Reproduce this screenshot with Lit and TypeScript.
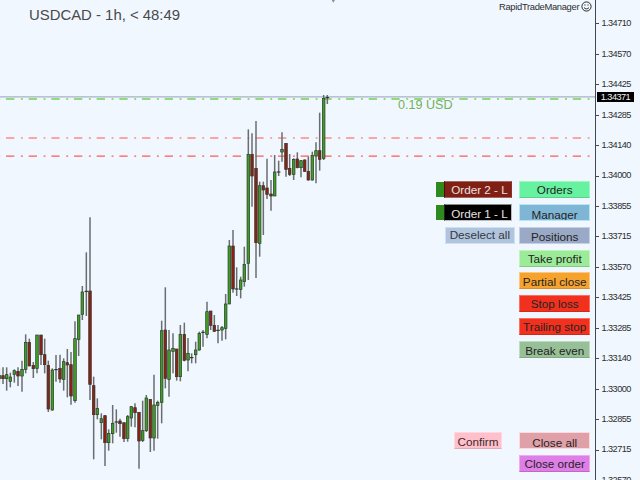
import { LitElement, html, css, svg } from "lit";
import { customElement } from "lit/decorators.js";

type C = [number, number, number, number, number, number];
// zoomed crop coordinates: x, wickTop, wickBottom, bodyTop, bodyBottom, dir (1 up, -1 down, 0 doji)
const setA: C[] = [
  [-2,265,310,286,296,1],[9,262,312,287,296,-1],[20,262,332,284,296,1],[31,278,322,291,304,1],[43,268,308,272,283,1],
  [54,262,318,274,288,-1],[66,242,335,268,288,1],[77,163,280,187,268,1],[88,176,258,187,258,-1],[100,246,294,256,266,-1],
  [111,165,280,165,265,1],[123,165,255,165,224,-1],[134,176,280,224,254,-1],[145,242,396,256,387,-1],[157,265,392,270,390,1],
  [168,225,305,268,270,0],[180,224,308,265,297,-1],[191,235,332,245,298,1],[202,207,352,248,255,-1],[213,216,374,254,348,-1],
  [225,124,368,176,362,1],[236,105,228,105,178,1],[247,18,120,36,103,1],[259,-83,108,33,35,0],[270,-188,360,33,313,-1],
  [281,290,538,317,404,-1],[292,355,418,385,404,1],[304,400,478,416,428,1],[315,405,558,407,488,-1],[326,448,512,460,488,1],
  [338,375,490,430,461,1],[349,388,458,425,427,0],[360,416,470,423,431,-1],[372,428,486,428,476,-1],[383,405,485,410,475,1],
  [394,378,440,380,414,1],[405,370,442,383,398,-1],[417,397,566,397,483,-1],[428,362,486,452,481,1],[439,345,456,354,452,1],
  [451,358,516,358,474,-1],[462,284,512,375,474,1],[473,362,476,367,376,1],[485,122,430,152,367,1],[496,22,325,150,295,-1],
  [507,150,350,210,298,1],[519,160,280,205,214,1],[530,207,302,207,290,-1],[541,135,304,163,290,1],[553,128,244,163,241,-1],
  [564,174,274,220,240,1],[575,220,250,232,234,0],[587,185,250,210,224,1],[598,155,212,160,210,1],[609,150,200,156,158,0],
  [621,65,175,95,163,1],
];
const setB: C[] = [
  [32,123,180,123,166,-1],[43,135,186,166,184,-1],[54,165,220,180,182,0],[66,168,212,173,180,1],[77,72,208,102,175,1],
];
const setD: C[] = [
  [88,480,672,498,672,1],[99,450,638,498,627,-1],[110,562,648,626,628,0],[122,590,655,600,628,1],[133,500,620,553,605,1],
  [145,148,600,223,550,1],[156,160,380,223,288,-1],[168,123,594,265,488,-1],[179,305,530,317,490,1],[190,305,465,317,330,-1],
  [201,236,357,324,343,-1],[213,300,392,342,348,-1],[224,225,348,276,348,1],[236,242,288,275,277,0],[246,157,245,208,216,1],
  [258,190,290,190,268,-1],[269,222,288,265,283,-1],[281,235,300,238,283,1],[292,217,265,237,263,-1],[303,240,292,242,263,1],
  [314,238,276,240,274,-1],[325,230,302,274,300,-1],[337,215,302,226,300,1],[348,187,310,212,228,1],[359,98,272,212,238,-1],
  [371,45,240,55,235,1],[382,45,72,52,54,0],
];
const toAbs = (list: C[], ox: number, oy: number): C[] =>
  list.map(([x, a, b, c, d, s]) => [ox + x / 3, oy + a / 3, oy + b / 3, oy + c / 3, oy + d / 3, s] as C);
const candles: C[] = [...toAbs(setA, 0, 280), ...toAbs(setB, 200, 270), ...toAbs(setD, 200, 80)];

const prices = ["1.34710","1.34570","1.34425","1.34285","1.34140","1.34000","1.33855","1.33715","1.33570","1.33425","1.33285","1.33140","1.33000","1.32855","1.32715","1.32570"];

@customElement("app-root")
export class AppRoot extends LitElement {
  static styles = css`
    :host { display: block; width: 640px; height: 480px; overflow: hidden; }
    .root { position: relative; display: grid; grid-template-columns: 595px 45px; width: 640px; height: 480px; background: #f0f7ff; overflow: hidden; font-family: "Liberation Sans", Arial, sans-serif; }
    .chart { display: block; width: 595px; height: 480px; }
    .w { stroke: #6a6e71; stroke-width: 1.5; }
    .b { stroke: #2b3a2e; stroke-width: 0.7; }
    .up { fill: #3f9e22; }
    .dn { fill: #8e2014; }
    .dj { stroke: #1c2420; stroke-width: 1; }
    .lg { stroke: #a9b2c2; stroke-width: 1.3; }
    .dash { stroke-width: 1.3; fill: none; stroke-dasharray: 8.3 6.6 1.9 5.87; stroke-dashoffset: -6; }
    .gr { stroke: #6cd457; stroke-width: 1.6; }
    .r1 { stroke: #ff8a84; }
    .r2 { stroke: #ff5a52; }
    .usd { font-size: 12.6px; fill: #74b05a; font-family: "Liberation Sans", Arial, sans-serif; }
    .mark { fill: #8c93a0; }
    .axis { border-left: 1.4px solid #45484c; display: flex; flex-direction: column; padding-top: 8.7px; box-sizing: border-box; height: 480px; }
    .tick { flex: 0 0 30.44px; display: flex; align-items: center; gap: 3px; font-size: 9.2px; color: #2e2e2e; letter-spacing: -0.55px; line-height: 1; }
    .tick::before { content: ""; width: 2.5px; height: 1px; background: #45484c; }
    .cur { position: absolute; left: 596.8px; top: 91.6px; width: 37.4px; height: 10.4px; background: #000; color: #f2f2f2; font-size: 9.2px; letter-spacing: -0.55px; line-height: 10.4px; text-align: center; }
    .title { position: absolute; left: 29px; top: 6px; font-size: 14.9px; line-height: 18px; color: #4a4a4a; }
    .brand { position: absolute; left: 499px; top: 0; height: 12px; display: flex; align-items: center; gap: 2px; font-size: 9.4px; letter-spacing: -0.32px; color: #2e2e2e; }
    .brand svg { display: block; }
    .panel { position: absolute; left: 436px; top: 181px; display: grid; grid-template-columns: 79px 70.6px; column-gap: 4.4px; grid-auto-rows: 17px; row-gap: 5.85px; }
    .btn { box-sizing: border-box; display: flex; align-items: center; justify-content: center; height: 17px; padding-top: 1px; font-size: 11.7px; line-height: 1; color: #242424; border: 1px solid; white-space: nowrap; overflow: hidden; }
    .order { display: flex; height: 17px; width: 76px; }
    .tab { width: 8px; height: 15px; margin-top: 1px; background: #2f8a1e; }
    .order .btn { flex: 1; color: #e8e2e0; padding: 0 0 0 3px; }
    .o2 { background: #802015; border-color: #a56a60 #8a3025 #a06a62 #4a1008; }
    .o1 { background: #000; border-color: #888 #bbb #bbb #222; }
    .o1 span { position: relative; top: 2px; }
    .low { padding-top: 4px; }
    .deselect { grid-column: 1; grid-row: 3; margin-left: 8.7px; padding-top: 0; background: #b0c4de; border-color: #cfe0f2; color: #33383f; }
    .confirm { grid-column: 1; grid-row: 12; margin-left: 18px; width: 48px; padding-top: 3px; background: #ffc0cb; border-color: #ffd8df; border-bottom-color: #e8a8b2; color: #3a2a2c; }
    .col2 { grid-column: 2; }
    .orders { grid-row: 1; background: #66f2a0; border-color: #9cf8c0; border-bottom-color: #5ad08c; }
    .manager { grid-row: 2; background: #7fb6d6; border-color: #b4e6f6; }
    .positions { grid-row: 3; background: #9aa9c6; border-color: #c4d0e6; }
    .tp { grid-row: 4; background: #9ceb98; border-color: #c0f4bc; border-bottom-color: #84cc80; }
    .pc { grid-row: 5; background: #f5a22e; border-color: #fbc880; border-bottom-color: #dc8e20; }
    .sl { grid-row: 6; background: #f2301e; border-color: #fa7060; border-bottom-color: #d42818; }
    .ts { grid-row: 7; background: #f2301e; border-color: #fa7060; border-bottom-color: #d42818; }
    .be { grid-row: 8; background: #98c098; border-color: #bcdcbc; border-bottom-color: #84aa84; padding-top: 2px; }
    .ca { grid-row: 12; background: #e0a0a8; border-color: #fdd8de; }
    .co { grid-row: 13; background: #e07ee8; border-color: #eeaaf2; border-bottom-color: #c068c8; }
    .r1st { grid-row: 1; grid-column: 1; }
    .r2nd { grid-row: 2; grid-column: 1; }
  `;

  private candle([x, wt, wb, bt, bb, s]: C) {
    const wick = svg`<line class="w" x1=${x} x2=${x} y1=${wt} y2=${wb}></line>`;
    if (s === 0) return svg`${wick}<line class="dj" x1=${x - 1.8} x2=${x + 1.8} y1=${(bt + bb) / 2} y2=${(bt + bb) / 2}></line>`;
    return svg`${wick}<rect class="b ${s > 0 ? "up" : "dn"}" x=${x - 1.3} y=${bt} width="2.6" height=${Math.max(bb - bt, 1)}></rect>`;
  }

  render() {
    return html`<div class="root">
      <svg class="chart" viewBox="0 0 595 480">
        <path class="mark" d="M331.6 0h3.4L333.3 2.8z"></path>
        <line class="lg" x1="0" x2="595" y1="96.8" y2="96.8"></line>
        <line class="dash gr" x1="0" x2="591" y1="99" y2="99"></line>
        <line class="dash r1" x1="0" x2="591" y1="138" y2="138"></line>
        <line class="dash r2" x1="0" x2="591" y1="156.2" y2="156.2"></line>
        ${candles.map((c) => this.candle(c))}
        <text class="usd" x="398" y="109">0.19 USD</text>
      </svg>
      <div class="axis">${prices.map((p) => html`<div class="tick">${p}</div>`)}</div>
      <div class="cur">1.34371</div>
      <div class="title">USDCAD - 1h, &lt; 48:49</div>
      <div class="brand">RapidTradeManager
        <svg width="11" height="11" viewBox="0 0 11 11" fill="none" stroke="#2a2a2a" stroke-width="1">
          <circle cx="5.5" cy="5.5" r="4.6"></circle>
          <path d="M3 6.6c1.2 1.7 3.8 1.7 5 0"></path>
          <path d="M3.4 4h1.2M6.4 4h1.2" stroke-width="1.2"></path>
        </svg>
      </div>
      <div class="panel">
        <div class="order r1st"><div class="tab"></div><div class="btn o2"><span>Order 2 - L</span></div></div>
        <div class="order r2nd"><div class="tab"></div><div class="btn o1"><span>Order 1 - L</span></div></div>
        <div class="btn deselect">Deselect all</div>
        <div class="btn col2 orders">Orders</div>
        <div class="btn col2 manager low">Manager</div>
        <div class="btn col2 positions low">Positions</div>
        <div class="btn col2 tp">Take profit</div>
        <div class="btn col2 pc">Partial close</div>
        <div class="btn col2 sl">Stop loss</div>
        <div class="btn col2 ts">Trailing stop</div>
        <div class="btn col2 be">Break even</div>
        <div class="btn confirm">Confirm</div>
        <div class="btn col2 ca low">Close all</div>
        <div class="btn col2 co">Close order</div>
      </div>
    </div>`;
  }
}
